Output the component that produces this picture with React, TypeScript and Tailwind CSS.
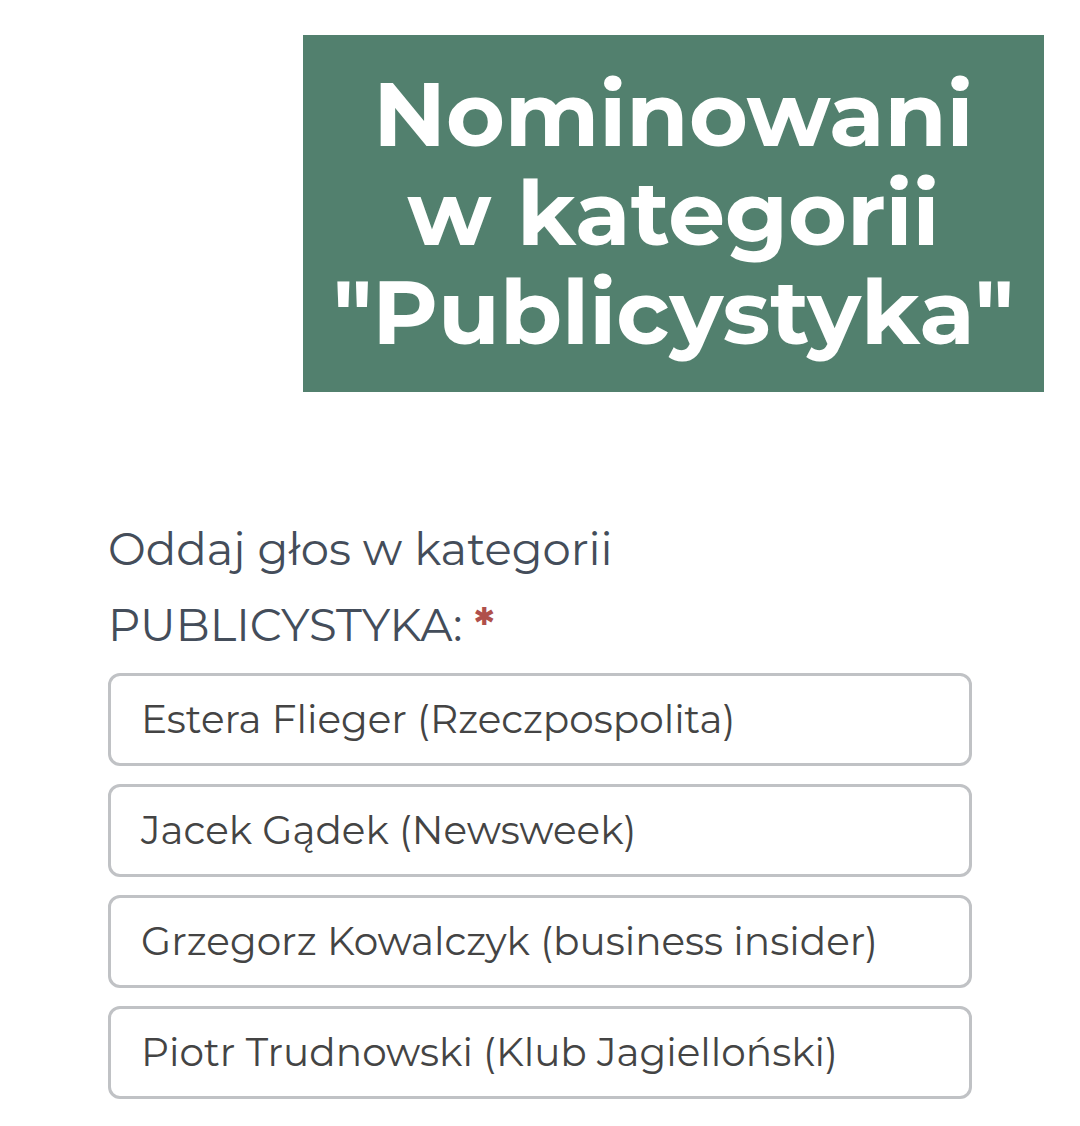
const nominees = [
  "Estera Flieger (Rzeczpospolita)",
  "Jacek Gądek (Newsweek)",
  "Grzegorz Kowalczyk (business insider)",
  "Piotr Trudnowski (Klub Jagielloński)",
];

export default function App() {
  return (
    <main className="bg-white pb-7 font-[Montserrat,Inter,sans-serif]">
      <header className="flex justify-end pt-[35px] pr-9">
        <h1 className="bg-[#52806e] px-[30px] py-[30px] text-center text-[90px] leading-[99px] font-bold text-white">
          Nominowani
          <br />w kategorii
          <br />
          "Publicystyka"
        </h1>
      </header>

      <form className="px-[108px] pt-[119px]">
        <fieldset>
          <legend className="text-[45px] leading-[76px] text-[#444d5a]">
            Oddaj głos w kategorii
            <br />
            PUBLICYSTYKA:{" "}
            <span className="font-bold text-[#b0504b]">*</span>
          </legend>

          <div className="mt-[10px] flex flex-col gap-[18px]">
            {nominees.map((name) => (
              <label
                key={name}
                className="block cursor-pointer rounded-xl border-3 border-[#c0c2c5] px-[30px] py-[13px] text-[39px] leading-[61px] text-[#444444] has-checked:border-[#52806e]"
              >
                <input
                  type="radio"
                  name="publicystyka"
                  value={name}
                  className="sr-only"
                />
                {name}
              </label>
            ))}
          </div>
        </fieldset>
      </form>
    </main>
  );
}
